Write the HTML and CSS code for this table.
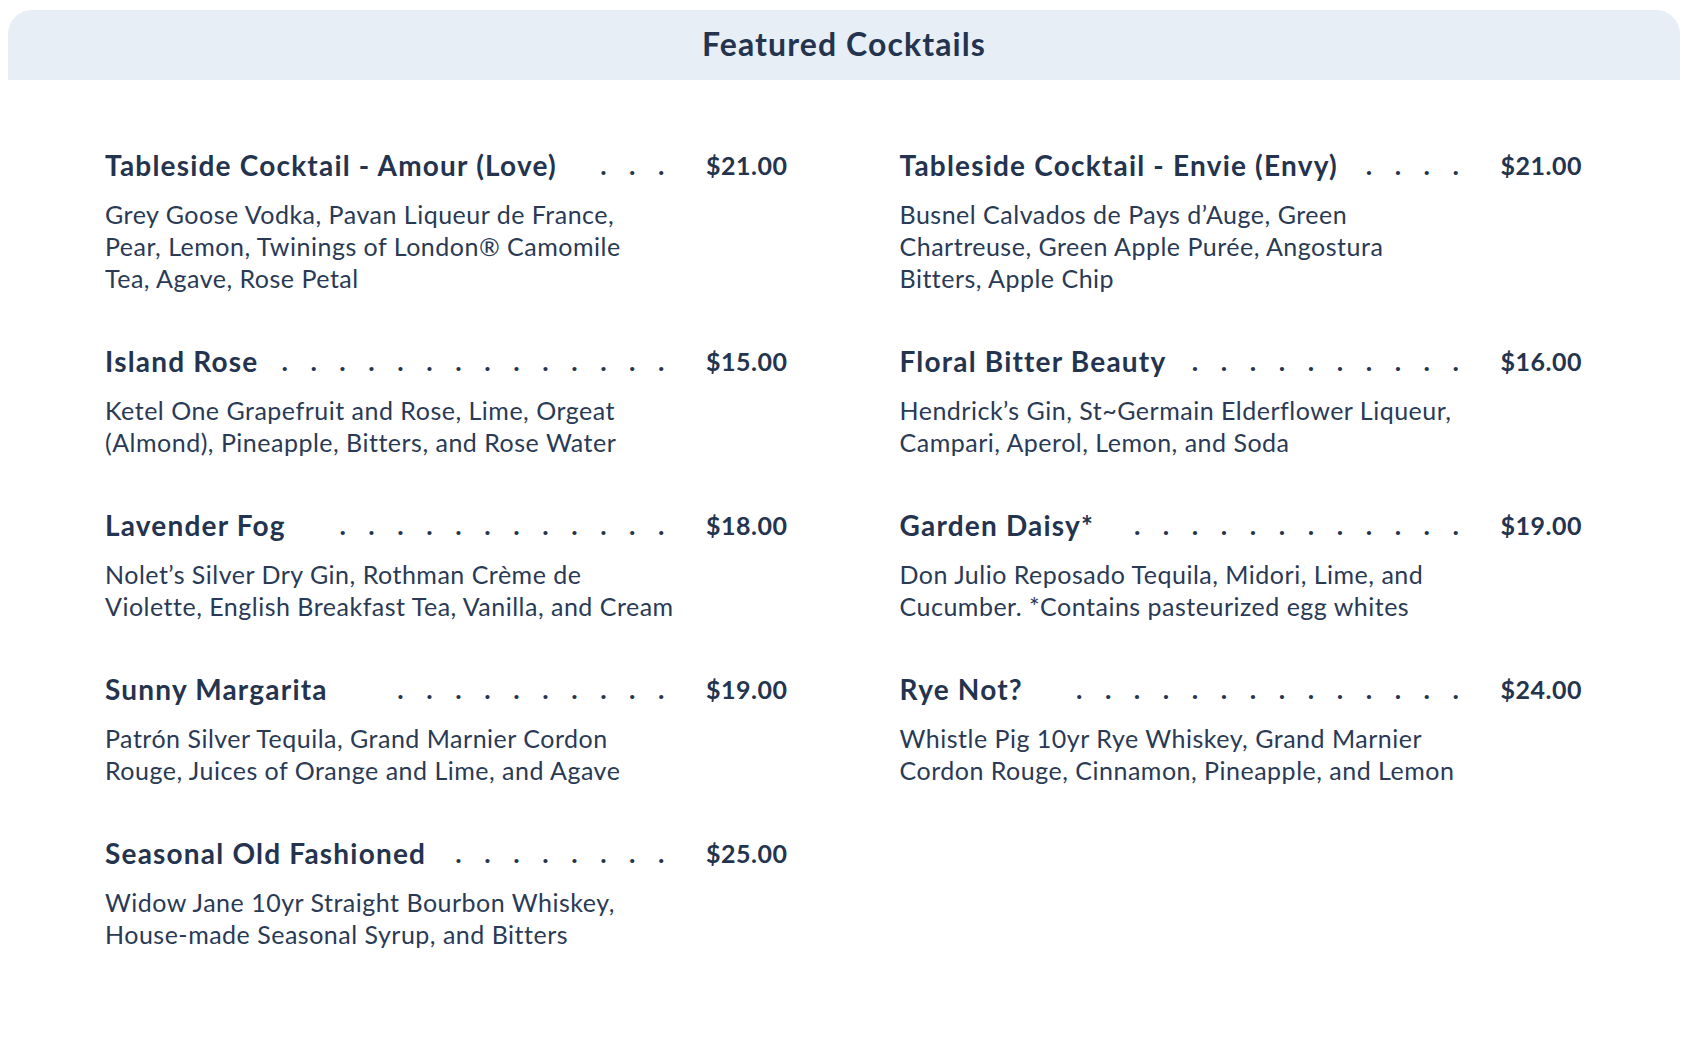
FILE: index.html
```html
<!DOCTYPE html>
<html lang="en">
<head>
<meta charset="utf-8">
<title>Featured Cocktails</title>
<link rel="stylesheet" href="styles.css">
</head>
<body>
<div class="page">
  <header class="band">
    <h1 class="title">Featured Cocktails</h1>
  </header>
  <section class="menu">
    <article class="item">
      <div class="head"><h2 class="name">Tableside Cocktail - Amour (Love)</h2><span class="leader">. . .</span><span class="price">$21.00</span></div>
      <p class="desc">Grey Goose Vodka, Pavan Liqueur de France,<br>Pear, Lemon, Twinings of London® Camomile<br>Tea, Agave, Rose Petal</p>
    </article>
    <article class="item">
      <div class="head"><h2 class="name">Tableside Cocktail - Envie (Envy)</h2><span class="leader">. . . .</span><span class="price">$21.00</span></div>
      <p class="desc">Busnel Calvados de Pays d’Auge, Green<br>Chartreuse, Green Apple Purée, Angostura<br>Bitters, Apple Chip</p>
    </article>
    <article class="item">
      <div class="head"><h2 class="name">Island Rose</h2><span class="leader">. . . . . . . . . . . . . .</span><span class="price">$15.00</span></div>
      <p class="desc">Ketel One Grapefruit and Rose, Lime, Orgeat<br>(Almond), Pineapple, Bitters, and Rose Water</p>
    </article>
    <article class="item">
      <div class="head"><h2 class="name">Floral Bitter Beauty</h2><span class="leader">. . . . . . . . . .</span><span class="price">$16.00</span></div>
      <p class="desc">Hendrick’s Gin, St~Germain Elderflower Liqueur,<br>Campari, Aperol, Lemon, and Soda</p>
    </article>
    <article class="item">
      <div class="head"><h2 class="name">Lavender Fog</h2><span class="leader">. . . . . . . . . . . .</span><span class="price">$18.00</span></div>
      <p class="desc">Nolet’s Silver Dry Gin, Rothman Crème de<br>Violette, English Breakfast Tea, Vanilla, and Cream</p>
    </article>
    <article class="item">
      <div class="head"><h2 class="name">Garden Daisy*</h2><span class="leader">. . . . . . . . . . . .</span><span class="price">$19.00</span></div>
      <p class="desc">Don Julio Reposado Tequila, Midori, Lime, and<br>Cucumber. *Contains pasteurized egg whites</p>
    </article>
    <article class="item">
      <div class="head"><h2 class="name">Sunny Margarita</h2><span class="leader">. . . . . . . . . .</span><span class="price">$19.00</span></div>
      <p class="desc">Patrón Silver Tequila, Grand Marnier Cordon<br>Rouge, Juices of Orange and Lime, and Agave</p>
    </article>
    <article class="item">
      <div class="head"><h2 class="name">Rye Not?</h2><span class="leader">. . . . . . . . . . . . . .</span><span class="price">$24.00</span></div>
      <p class="desc">Whistle Pig 10yr Rye Whiskey, Grand Marnier<br>Cordon Rouge, Cinnamon, Pineapple, and Lemon</p>
    </article>
    <article class="item">
      <div class="head"><h2 class="name">Seasonal Old Fashioned</h2><span class="leader">. . . . . . . .</span><span class="price">$25.00</span></div>
      <p class="desc">Widow Jane 10yr Straight Bourbon Whiskey,<br>House-made Seasonal Syrup, and Bitters</p>
    </article>
  </section>
</div>
</body>
</html>
```
FILE: styles.css
```css
* { box-sizing: border-box; }
html, body { margin: 0; padding: 0; background: #ffffff; }
body {
  font-family: Lato, "Noto Sans", "Liberation Sans", sans-serif;
  color: #26364f;
}
.page { padding: 10px 8px 0 8px; }
.band {
  height: 70px;
  padding-bottom: 2px;
  background: #e7eef6;
  border-radius: 24px 24px 0 0;
  display: flex;
  align-items: center;
  justify-content: center;
}
.title {
  margin: 0;
  font-size: 32px;
  font-weight: 700;
  letter-spacing: 1.1px;
  line-height: 1;
  color: #24344e;
}
.menu {
  display: grid;
  grid-template-columns: 1fr 1fr;
  column-gap: 112px;
  padding: 69px 98px 0 97px;
}
.item { margin-bottom: 51px; }
.head {
  display: flex;
  align-items: flex-start;
  height: 32px;
  margin-bottom: 17px;
}
.name {
  margin: 0;
  font-size: 28px;
  font-weight: 700;
  letter-spacing: 1.2px;
  line-height: 32px;
  white-space: nowrap;
  color: #24344e;
}
.leader {
  flex: 1;
  min-width: 0;
  height: 32px;
  overflow: hidden;
  margin-left: 12px;
  text-align: right;
  white-space: nowrap;
  font-size: 27px;
  font-weight: 700;
  line-height: 32px;
  word-spacing: 16px;
  color: #24344e;
}
.price {
  width: 123px;
  flex: none;
  text-align: right;
  font-size: 25px;
  font-weight: 700;
  letter-spacing: 0.5px;
  line-height: 32px;
  color: #24344e;
}
.desc {
  margin: 0;
  max-width: 640px;
  font-size: 25px;
  letter-spacing: 0.5px;
  line-height: 32px;
  font-weight: 400;
  color: #2a3a55;
}
```
